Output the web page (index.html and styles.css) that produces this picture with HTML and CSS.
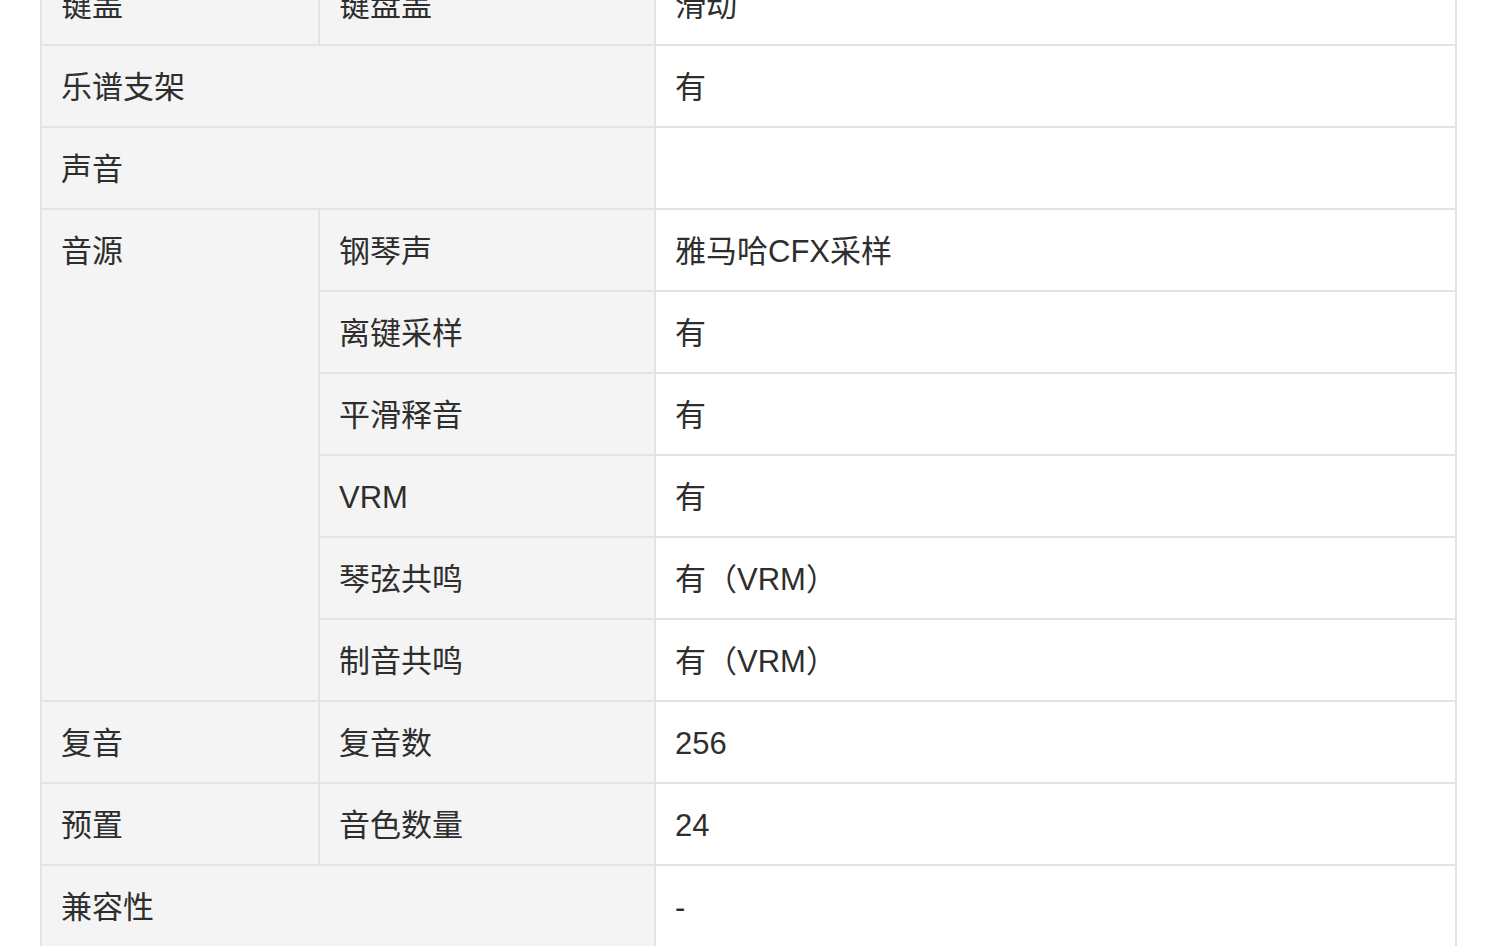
FILE: index.html
```html
<!DOCTYPE html>
<html lang="zh-CN">
<head>
<meta charset="utf-8">
<title>参数</title>
<link rel="stylesheet" href="styles.css">
</head>
<body>
<table class="spec">
  <colgroup>
    <col class="c1"><col class="c2"><col class="c3">
  </colgroup>
  <tbody>
    <tr><th>键盖</th><th>键盘盖</th><td>滑动</td></tr>
    <tr><th colspan="2">乐谱支架</th><td>有</td></tr>
    <tr><th colspan="2">声音</th><td></td></tr>
    <tr><th rowspan="6">音源</th><th>钢琴声</th><td>雅马哈CFX采样</td></tr>
    <tr><th>离键采样</th><td>有</td></tr>
    <tr><th>平滑释音</th><td>有</td></tr>
    <tr><th>VRM</th><td>有</td></tr>
    <tr><th>琴弦共鸣</th><td>有（VRM）</td></tr>
    <tr><th>制音共鸣</th><td>有（VRM）</td></tr>
    <tr><th>复音</th><th>复音数</th><td>256</td></tr>
    <tr><th>预置</th><th>音色数量</th><td>24</td></tr>
    <tr><th colspan="2">兼容性</th><td>-</td></tr>
  </tbody>
</table>
</body>
</html>
```

FILE: styles.css
```css
html, body {
  margin: 0;
  padding: 0;
  background: #ffffff;
}
body {
  overflow: hidden;
  height: 946px;
}
.spec {
  border-collapse: collapse;
  table-layout: fixed;
  width: 1417px;
  margin: -38px 0 0 40px;
  font-family: "Liberation Sans", "Noto Sans CJK SC", sans-serif;
  font-size: 31px;
  color: #2e2e2e;
}
.spec .c1 { width: 278px; }
.spec .c2 { width: 336px; }
.spec .c3 { width: auto; }
.spec th,
.spec td {
  border: 2px solid #e3e3e3;
  height: 40px;
  line-height: 40px;
  padding: 22px 18px 18px 19px;
  text-align: left;
  vertical-align: top;
  font-weight: normal;
  white-space: nowrap;
}
.spec th {
  background: #f4f4f4;
}
.spec td {
  background: #ffffff;
}
```
